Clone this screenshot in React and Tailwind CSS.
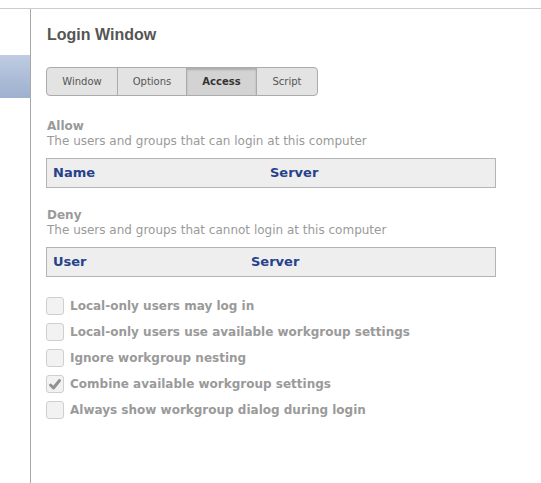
import { useState } from 'react'

const tabs = [
  { label: 'Window', w: 'w-[70px]' },
  { label: 'Options', w: 'w-[69px]' },
  { label: 'Access', w: 'w-[70px]' },
  { label: 'Script', w: 'w-[61px]' },
]

const options = [
  { label: 'Local-only users may log in', checked: false },
  { label: 'Local-only users use available workgroup settings', checked: false },
  { label: 'Ignore workgroup nesting', checked: false },
  { label: 'Combine available workgroup settings', checked: true },
  { label: 'Always show workgroup dialog during login', checked: false },
]

function Checkbox({ checked }) {
  return (
    <div className="w-[18px] h-[18px] shrink-0 rounded-[3px] border border-[#cfcfcf] bg-[#f2f2f2] flex items-center justify-center">
      {checked && (
        <svg width="14" height="14" viewBox="0 0 14 14">
          <polyline points="2.5,8 5.5,11 11.5,3.5" fill="none" stroke="#929292" strokeWidth="3" strokeLinecap="round" strokeLinejoin="round" />
        </svg>
      )}
    </div>
  )
}

function Section({ title, desc, first, second, firstW }) {
  return (
    <div>
      <div className="pl-[1px] text-[12px] leading-[15px] font-bold text-[#9a9a9a]">{title}</div>
      <div className="pl-[1px] text-[12px] leading-[15px] text-[#9a9a9a]">{desc}</div>
      <div className="mt-[9px] w-[450px] h-[30px] border border-[#b4b4b4] bg-[#eeeeee] flex items-center pl-[6px] text-[13px] font-bold text-[#26428b]">
        <span className={firstW}>{first}</span>
        <span>{second}</span>
      </div>
    </div>
  )
}

export default function App() {
  const [active] = useState('Access')

  return (
    <div className="w-[541px] h-[483px] bg-white flex flex-col overflow-hidden font-['DejaVu_Sans',Verdana,sans-serif]">
      {/* top rule */}
      <div className="h-[9px] shrink-0 border-b border-[#cccccc]"></div>

      <div className="flex flex-1">
        {/* sidebar */}
        <div className="w-[31px] shrink-0 border-r border-[#a8a8a8]">
          <div className="mt-[46px] h-[43px] bg-gradient-to-b from-[#bfcce2] to-[#9db0cf]"></div>
        </div>

        {/* content */}
        <div className="flex-1 pl-[15px] pt-[16px]">
          <h1 className="text-[16px] leading-[20px] font-bold text-[#555555] font-['Liberation_Sans',Arial,sans-serif] pl-[1px]">
            Login Window
          </h1>

          <div className="mt-[22px] flex w-max h-[29px] rounded-[4px] border border-[#ababab] bg-[#e3e3e3] overflow-hidden">
            {tabs.map((t, i) => (
              <div
                key={t.label}
                className={`${t.w} flex items-center justify-center text-[10px] ${
                  i > 0 ? 'border-l border-[#ababab]' : ''
                } ${
                  active === t.label
                    ? 'bg-[#d3d3d3] font-bold text-[#333333] shadow-[inset_0_2px_2px_rgba(0,0,0,0.18)]'
                    : 'text-[#555555]'
                }`}
              >
                {t.label}
              </div>
            ))}
          </div>

          <div className="mt-[23px]">
            <Section
              title="Allow"
              desc="The users and groups that can login at this computer"
              first="Name"
              second="Server"
              firstW="w-[217px]"
            />
          </div>

          <div className="mt-[20px]">
            <Section
              title="Deny"
              desc="The users and groups that cannot login at this computer"
              first="User"
              second="Server"
              firstW="w-[198px]"
            />
          </div>

          <div className="mt-[20px] flex flex-col gap-[8px]">
            {options.map((o) => (
              <div key={o.label} className="flex items-center gap-[6px] h-[18px]">
                <Checkbox checked={o.checked} />
                <span className="text-[12px] font-bold text-[#9a9a9a] whitespace-nowrap">{o.label}</span>
              </div>
            ))}
          </div>
        </div>
      </div>
    </div>
  )
}
